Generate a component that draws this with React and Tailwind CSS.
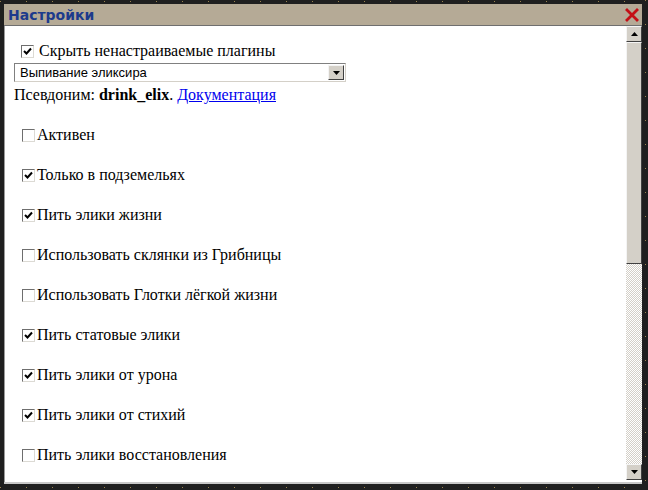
import React from "react";

const options = [
  { label: "Активен", checked: false },
  { label: "Только в подземельях", checked: true },
  { label: "Пить элики жизни", checked: true },
  { label: "Использовать склянки из Грибницы", checked: false },
  { label: "Использовать Глотки лёгкой жизни", checked: false },
  { label: "Пить статовые элики", checked: true },
  { label: "Пить элики от урона", checked: true },
  { label: "Пить элики от стихий", checked: true },
  { label: "Пить элики восстановления", checked: false },
];

// classic windows-looking checkbox
function Box({ checked }) {
  return (
    <span className="w-[13px] h-[13px] shrink-0 bg-white border border-t-[#6e6e6e] border-l-[#6e6e6e] border-b-[#dcdad4] border-r-[#dcdad4] flex items-center justify-center">
      {checked && (
        <svg width="9" height="9" viewBox="0 0 9 9">
          <path d="M1 4 L3.5 6.5 L8 1.5" fill="none" stroke="#000" strokeWidth="2" />
        </svg>
      )}
    </span>
  );
}

export default function App() {
  return (
    <div className="w-[648px] h-[490px] bg-[#1f1f1f] pt-[4px] pl-[4px] pr-[6px] pb-[6px] relative">
      {/* gold dots on the frame */}
      <div className="absolute left-0 right-0 top-[1px] h-px bg-[repeating-linear-gradient(90deg,#9a8450_0_1px,transparent_1px_26px)]" />
      <div className="absolute left-0 right-0 bottom-[2px] h-px bg-[repeating-linear-gradient(90deg,#9a8450_0_1px,transparent_1px_26px)]" />
      <div className="absolute top-0 bottom-0 right-[2px] w-px bg-[repeating-linear-gradient(180deg,#9a8450_0_1px,transparent_1px_24px)]" />
      <div className="w-full h-full flex flex-col bg-white">
        {/* title bar */}
        <div className="h-[22px] bg-[#b5aa96] border-b border-[#6f6f6f] flex items-center justify-between pl-[4px] pr-[3px]">
          <span className="text-[14px] font-bold text-[#1d3a8c] leading-none" style={{ fontFamily: "'DejaVu Sans', sans-serif" }}>
            Настройки
          </span>
          <svg width="14" height="14" viewBox="0 0 14 14" className="mt-[1px]">
            <path d="M2 2 L12 12 M12 2 L2 12" stroke="#c40f16" strokeWidth="2.8" strokeLinecap="square" />
          </svg>
        </div>

        <div className="flex flex-1 min-h-0 border-l border-[#9a9a9a]">
          {/* content */}
          <div className="flex-1 pl-[9px] pt-[18px]" style={{ fontFamily: "'Liberation Serif', serif" }}>
            <div className="flex items-center gap-[5px] pl-[7px] h-[14px]">
              <Box checked />
              <span className="text-[16px] leading-none">Скрыть ненастраиваемые плагины</span>
            </div>
            <div className="mt-[5px] w-[332px] h-[19px] border border-t-[#808080] border-l-[#808080] border-b-[#d4d0c8] border-r-[#d4d0c8] flex items-center justify-between bg-white">
              <span className="pl-[5px] text-[13px] leading-none" style={{ fontFamily: "'Liberation Sans', sans-serif" }}>
                Выпивание эликсира
              </span>
              <span className="w-[16px] h-[15px] mr-px bg-[#d4d0c8] border border-t-[#f4f4f4] border-l-[#f4f4f4] border-b-[#404040] border-r-[#404040] flex items-center justify-center">
                <svg width="7" height="4" viewBox="0 0 7 4">
                  <path d="M0 0 H7 L3.5 4 Z" fill="#000" />
                </svg>
              </span>
            </div>
            <div className="mt-[4px] h-[18px] flex items-center text-[16px] leading-none">
              <span>Псевдоним:&nbsp;</span>
              <b>drink_elix</b>
              <span>.&nbsp;</span>
              <a href="#" className="text-[#0000ee] underline">Документация</a>
            </div>
            <div className="mt-[11px] pl-[8px] flex flex-col">
              {options.map((o) => (
                <div key={o.label} className="h-[40px] flex items-center gap-[2px]">
                  <Box checked={o.checked} />
                  <span className="text-[16px] leading-none">{o.label}</span>
                </div>
              ))}
            </div>
          </div>

          {/* scrollbar */}
          <div className="w-[16px] flex flex-col mb-[2px] bg-[repeating-conic-gradient(#d4d0c8_0_25%,#ffffff_0_50%)] bg-[length:2px_2px]">
            <div className="h-[16px] bg-[#d4d0c8] border border-t-[#f4f4f4] border-l-[#f4f4f4] border-b-[#404040] border-r-[#404040] flex items-center justify-center">
              <svg width="7" height="4" viewBox="0 0 7 4">
                <path d="M0 4 H7 L3.5 0 Z" fill="#000" />
              </svg>
            </div>
            <div className="h-[222px] bg-[#d4d0c8] border border-t-[#f4f4f4] border-l-[#f4f4f4] border-b-[#404040] border-r-[#404040]" />
            <div className="flex-1" />
            <div className="h-[16px] bg-[#d4d0c8] border border-t-[#f4f4f4] border-l-[#f4f4f4] border-b-[#404040] border-r-[#404040] flex items-center justify-center">
              <svg width="7" height="4" viewBox="0 0 7 4">
                <path d="M0 0 H7 L3.5 4 Z" fill="#000" />
              </svg>
            </div>
          </div>
        </div>
        <div className="h-[2px] bg-[#c8c8c8]" />
      </div>
    </div>
  );
}
